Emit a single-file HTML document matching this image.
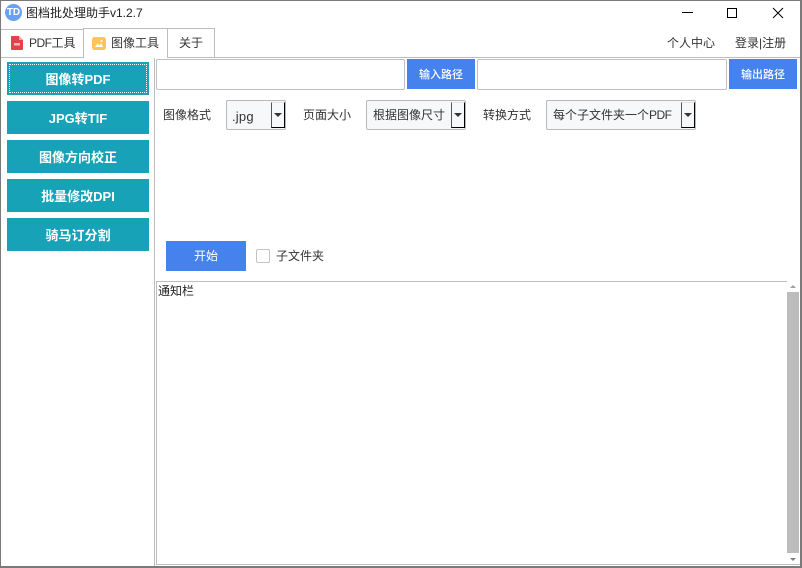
<!DOCTYPE html>
<html lang="zh">
<head>
<meta charset="utf-8">
<style>
html,body{margin:0;padding:0;background:#fff;}
body{width:802px;height:568px;position:relative;overflow:hidden;font-family:"Liberation Sans","Noto Sans CJK SC",sans-serif;font-size:12px;color:#333;}
div,span,svg{position:absolute;box-sizing:border-box;}
i{font-style:normal;letter-spacing:-0.5px;}
.t{white-space:nowrap;line-height:16px;}
.side{left:7px;width:142px;height:33px;background:#17a2b8;color:#fff;font-weight:bold;font-size:13px;text-align:center;line-height:35px;}
.inp{height:31px;top:59px;background:#fff;border:1px solid #c0c0c0;border-radius:2px;}
.blue{background:#4682ee;color:#fff;text-align:center;}
.sel{top:100px;height:30px;background:#f6f8fa;border:1px solid #b8b8b8;border-radius:2px;}
.arr{top:1px;width:14px;height:26px;background:#f6f8fa;border-left:1px solid #555;border-right:1px solid #000;border-bottom:1px solid #000;border-top:1px solid #e4e4e4;}
.arr:after{content:"";position:absolute;left:2px;top:10px;border-left:4px solid transparent;border-right:4px solid transparent;border-top:4px solid #333;}
.tab{top:28px;height:30px;background:#fff;border:1px solid #bdbdbd;}
</style>
</head>
<body>
<!-- window frame -->
<div style="left:0;top:0;width:802px;height:568px;border:1px solid #7a7a7a;border-right-width:2px;border-bottom-width:2px;z-index:20;"></div>

<!-- title bar -->
<div style="left:5px;top:4px;width:17px;height:17px;border-radius:50%;background:#6aa0f2;color:#fff;font-size:10px;font-weight:bold;text-align:center;line-height:18px;">TD</div>
<div class="t" style="left:26px;top:5px;color:#222;">图档批处理助手v1.2.7</div>
<div style="left:682px;top:12px;width:11px;height:1px;background:#000;"></div>
<div style="left:727px;top:8px;width:10px;height:10px;border:1px solid #000;"></div>
<svg style="left:772px;top:7px;" width="12" height="12" viewBox="0 0 12 12"><path d="M1 1L11 11M11 1L1 11" stroke="#000" stroke-width="1" fill="none"/></svg>

<!-- tabs -->
<div style="left:1px;top:57px;width:799px;height:1px;background:#bdbdbd;"></div>
<div class="tab" style="left:1px;top:29px;width:83px;height:29px;border-left:none;"></div>
<div class="tab" style="left:167px;width:48px;height:30px;"></div>
<div class="tab" style="left:83px;width:85px;height:30px;border-bottom:none;z-index:2;"></div>
<svg style="left:11px;top:36px;" width="12" height="14" viewBox="0 0 12 14"><path d="M0 1Q0 0 1 0H8L12 4V13Q12 14 11 14H1Q0 14 0 13Z" fill="#e8404a"/><path d="M8 0L12 4H8Z" fill="#f4a3a8"/><rect x="3" y="7" width="6" height="2.5" fill="#f7b8bb"/></svg>
<div class="t" style="left:29px;top:35px;color:#333;"><i>PDF</i>工具</div>
<svg style="left:92px;top:37px;z-index:3;" width="14" height="13" viewBox="0 0 14 13"><rect width="14" height="13" rx="2.5" fill="#fdc45c"/><path d="M3 10L5.5 6.5L7.5 8.5L9 6L11 10Z" fill="#fff"/><circle cx="9.5" cy="4" r="1" fill="#fff"/></svg>
<div class="t" style="left:111px;top:35px;color:#333;z-index:3;">图像工具</div>
<div class="t" style="left:179px;top:35px;color:#333;">关于</div>
<div class="t" style="left:667px;top:35px;color:#333;">个人中心</div>
<div class="t" style="left:735px;top:35px;color:#333;">登录|注册</div>

<!-- sidebar -->
<div class="side" style="top:62px;">图像转PDF</div>
<div style="left:9px;top:64px;width:138px;height:29px;border:1px dotted #fff;"></div>
<div class="side" style="top:101px;">JPG转TIF</div>
<div class="side" style="top:140px;">图像方向校正</div>
<div class="side" style="top:179px;">批量修改DPI</div>
<div class="side" style="top:218px;">骑马订分割</div>

<!-- divider -->
<div style="left:154px;top:58px;width:1px;height:508px;background:#bdbdbd;"></div>

<!-- paths -->
<div class="inp" style="left:156px;width:249px;"></div>
<div class="blue" style="left:407px;top:59px;width:68px;height:30px;line-height:32px;font-size:11px;font-weight:500;">输入路径</div>
<div class="inp" style="left:477px;width:250px;"></div>
<div class="blue" style="left:729px;top:59px;width:68px;height:30px;line-height:32px;font-size:11px;font-weight:500;">输出路径</div>

<!-- options -->
<div class="t" style="left:163px;top:107px;">图像格式</div>
<div class="sel" style="left:226px;width:60px;">
  <div class="t" style="left:5px;top:8px;font-size:13px;letter-spacing:0.2px;">.jpg</div>
  <div class="arr" style="left:44px;"></div>
</div>
<div class="t" style="left:303px;top:107px;">页面大小</div>
<div class="sel" style="left:366px;width:100px;">
  <div class="t" style="left:6px;top:6px;">根据图像尺寸</div>
  <div class="arr" style="left:84px;"></div>
</div>
<div class="t" style="left:483px;top:107px;">转换方式</div>
<div class="sel" style="left:546px;width:150px;">
  <div class="t" style="left:6px;top:6px;">每个子文件夹一个<i>PDF</i></div>
  <div class="arr" style="left:134px;"></div>
</div>

<!-- start row -->
<div class="blue" style="left:166px;top:241px;width:80px;height:30px;line-height:31px;">开始</div>
<div style="left:256px;top:249px;width:14px;height:14px;border:1px solid #c4c4c4;border-radius:2px;background:#fff;"></div>
<div class="t" style="left:276px;top:248px;">子文件夹</div>

<!-- log box -->
<div style="left:156px;top:281px;width:644px;height:284px;border:1px solid #bdbdbd;border-right:none;background:#fff;"></div>
<div class="t" style="left:158px;top:283px;color:#222;">通知栏</div>
<div style="left:787px;top:281px;width:13px;height:283px;background:#fff;"></div>
<div style="left:787px;top:292px;width:12px;height:261px;background:#bcbcbc;"></div>
<div style="left:790px;top:285px;width:0;height:0;border-left:3px solid transparent;border-right:3px solid transparent;border-bottom:3px solid #a0a0a0;"></div>
<div style="left:790px;top:558px;width:0;height:0;border-left:3px solid transparent;border-right:3px solid transparent;border-top:3px solid #808080;"></div>
</body>
</html>
